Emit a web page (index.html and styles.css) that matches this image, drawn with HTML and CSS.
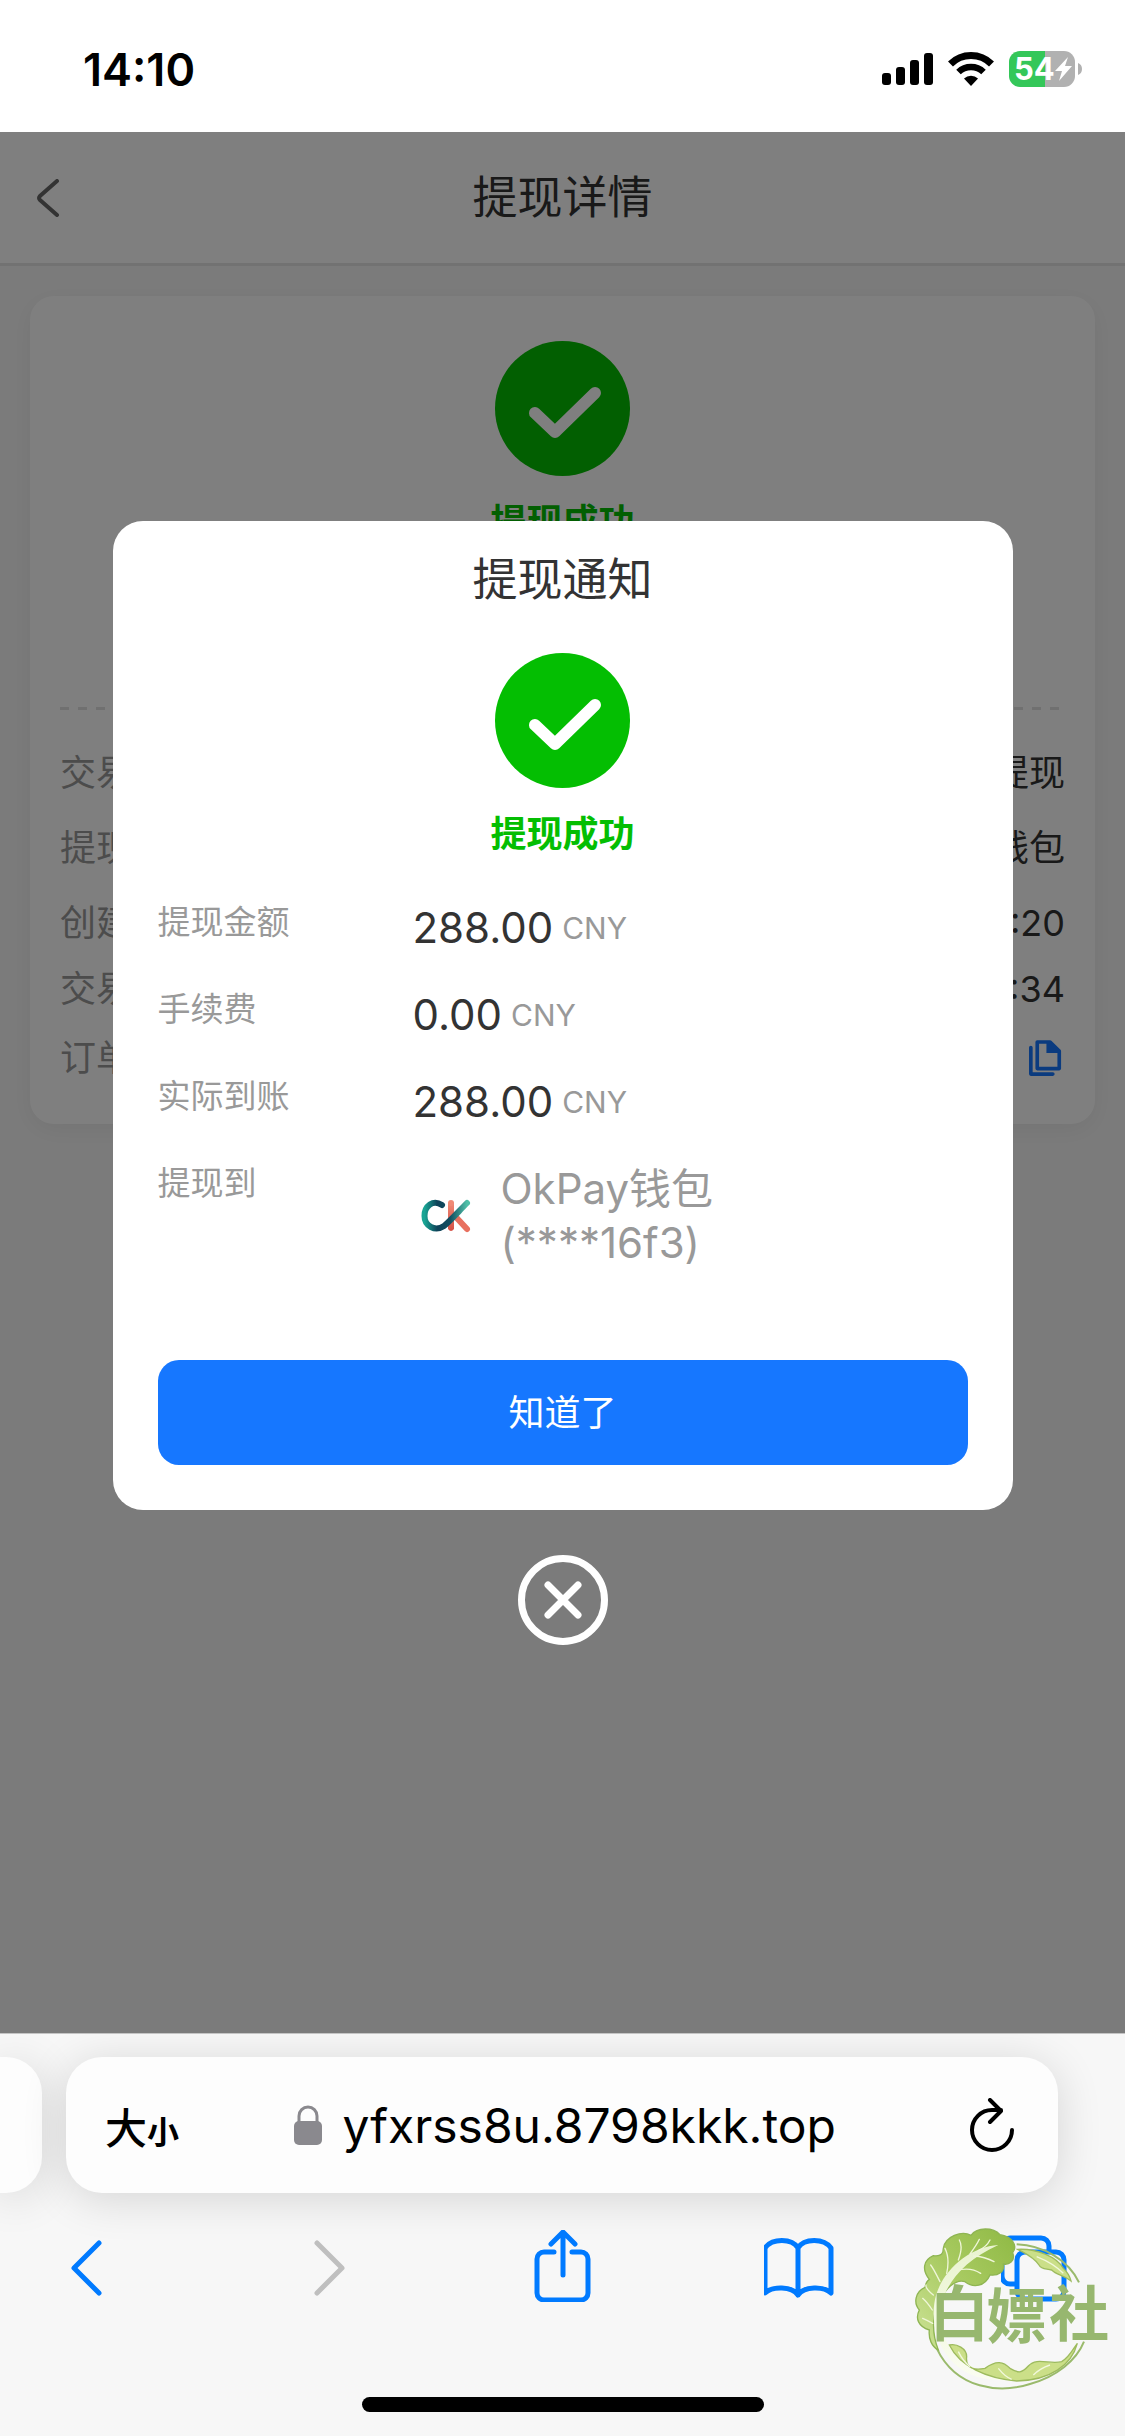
FILE: index.html
```html
<!DOCTYPE html>
<html lang="zh-CN">
<head>
  <meta charset="UTF-8" />
  <meta name="viewport" content="width=device-width, initial-scale=1.0" />
  <title>提现详情</title>
  <link rel="stylesheet" href="styles.css">
</head>
<body>
  <div class="status-bar">
    <span class="time">14:10</span>
    <div class="status-icons">
      <svg width="51" height="32" viewBox="0 0 51 32">
        <rect x="0" y="20" width="9" height="12" rx="3"/>
        <rect x="14" y="14" width="9" height="18" rx="3"/>
        <rect x="28" y="7" width="9" height="25" rx="3"/>
        <rect x="42" y="0" width="9" height="32" rx="3"/>
      </svg>
      <svg width="46" height="34" viewBox="0 0 46 34">
        <path d="M2.5 12a29 29 0 0 1 41 0" fill="none" stroke="#000" stroke-width="7"/>
        <path d="M10.500 20a18 18 0 0 1 25 0" fill="none" stroke="#000" stroke-width="6.500"/>
        <path d="M23 34l-7-7.500a10.500 10.500 0 0 1 14 0z"/>
      </svg>
      <svg width="73" height="36" viewBox="0 0 73 36">
        <path d="M11 0H36V36H11A11 11 0 0 1 0 25V11A11 11 0 0 1 11 0z" fill="#34c759"/>
        <path d="M36 0H55A11 11 0 0 1 66 11V25A11 11 0 0 1 55 36H36z" fill="#b1b1b1"/>
        <path d="M69 12q4 1.500 4 6t-4 6z" fill="#b1b1b1"/>
        <text class="battery-text" x="5" y="29">54</text>
        <path d="M59 6L46 20h7l-3 10 13-15h-7z" fill="#fff"/>
      </svg>
    </div>
  </div>

  <main class="page">
    <header class="header">
      <button class="back" aria-label="返回">
        <svg width="24" height="38" viewBox="0 0 24 38"><path d="M21 2L4 17q-2 2 0 4L21 36"/></svg>
      </button>
      <h1>提现详情</h1>
    </header>

    <section class="card">
      <div class="result">
        <svg class="check" viewBox="0 0 135 135"><circle cx="67.500" cy="67.500" r="67.500"/><path d="M40 72L60 91 100 52"/></svg>
        <p class="result-text">提现成功</p>
      </div>
      <p class="amount">288.00 CNY</p>
      <dl class="details">
        <div class="row"><dt>交易类型</dt><dd>提现</dd></div>
        <div class="row"><dt>提现方式</dt><dd>OkPay钱包</dd></div>
        <div class="row"><dt>创建时间</dt><dd>14:10:20</dd></div>
        <div class="row row-compact"><dt>交易时间</dt><dd>14:10:34</dd></div>
        <div class="row">
          <dt>订单号</dt>
          <dd>
            <button class="copy" aria-label="复制">
              <svg width="33" height="37" viewBox="0 0 36 40">
                <path d="M9 2H23L33 12V31H9z"/><path d="M2 8V37H26"/><path class="fold" d="M19 1h4l11 11v2H19z"/>
              </svg>
            </button>
          </dd>
        </div>
      </dl>
    </section>

    <div class="overlay">
      <div class="modal" role="dialog" aria-labelledby="modal-title">
        <h2 id="modal-title">提现通知</h2>
        <div class="result">
          <svg class="check" viewBox="0 0 135 135"><circle cx="67.500" cy="67.500" r="67.500"/><path d="M40 72L60 91 100 52"/></svg>
          <p class="result-text">提现成功</p>
        </div>
        <dl class="info">
          <dt>提现金额</dt>
          <dd>288.00 <small>CNY</small></dd>
          <dt>手续费</dt>
          <dd>0.00 <small>CNY</small></dd>
          <dt>实际到账</dt>
          <dd>288.00 <small>CNY</small></dd>
          <dt>提现到</dt>
          <dd class="wallet">
            <svg width="60" height="60" viewBox="0 0 60 60">
              <defs>
                <linearGradient id="teal" x1="0" y1="0" x2="1" y2="0">
                  <stop offset="0" stop-color="#19a594"/>
                  <stop offset=".3" stop-color="#0e4258"/>
                  <stop offset=".6" stop-color="#124d60"/>
                  <stop offset="1" stop-color="#4fc0a8"/>
                </linearGradient>
                <linearGradient id="coral" x1="0" y1="0" x2="0" y2="1">
                  <stop offset="0" stop-color="#f08a75"/>
                  <stop offset="1" stop-color="#d44f45"/>
                </linearGradient>
              </defs>
              <path d="M32 16.500h6V43q-3 4-6 0z" fill="url(#coral)"/>
              <circle cx="35" cy="17" r="3" fill="#f08a75"/>
              <path d="M38 29L51 43" stroke="#e8705f" stroke-width="6" stroke-linecap="round"/>
              <path d="M26 19C17 13 8.500 20 8.500 30 8.500 40 19 46 28 40 35 34 43 25 51 17" fill="none" stroke="url(#teal)" stroke-width="6" stroke-linecap="round"/>
            </svg>
            <span>OkPay钱包<br>(****16f3)</span>
          </dd>
        </dl>
        <button class="confirm">知道了</button>
      </div>
      <button class="close" aria-label="关闭">
        <svg width="90" height="90" viewBox="0 0 90 90"><circle cx="45" cy="45" r="41.500"/><path d="M30 30L60 60M60 30L30 60"/></svg>
      </button>
    </div>
  </main>

  <footer class="browser-bar">
    <div class="tabs-row">
      <div class="prev-tab"></div>
      <div class="address">
        <button class="text-size" aria-label="大小">大<small>小</small></button>
        <label class="url">
          <svg width="28" height="40" viewBox="0 0 28 40">
            <rect x="0" y="16" width="28" height="24" rx="5" fill="#8a898e"/>
            <path d="M5 17V11a9 9 0 0 1 18 0V17" fill="none" stroke="#8a898e" stroke-width="3"/>
          </svg>
          <input type="text" value="yfxrss8u.8798kkk.top" aria-label="网址">
        </label>
        <button class="reload" aria-label="刷新">
          <svg width="46" height="54" viewBox="0 0 46 54"><path d="M43 32A20 20 0 1 1 23 12H32M21 2L32 13 21 24"/></svg>
        </button>
      </div>
    </div>
    <nav class="toolbar">
      <button aria-label="后退"><svg viewBox="0 0 72 72"><path d="M47 13L22 38 47 63"/></svg></button>
      <button class="disabled" aria-label="前进"><svg viewBox="0 0 72 72"><path d="M28 13L53 38 28 63"/></svg></button>
      <button aria-label="分享"><svg viewBox="0 0 72 72"><path d="M27 22H17a7 7 0 0 0-7 7V63a7 7 0 0 0 7 7H54a7 7 0 0 0 7-7V29a7 7 0 0 0-7-7H45M36 3V45M24 14L36 2 48 14"/></svg></button>
      <button aria-label="书签"><svg viewBox="0 0 72 72"><path d="M34 18C28 8 8 8 1 18V63C8 56 28 56 34 65 40 56 60 56 67 63V18C60 8 40 8 34 18V65"/></svg></button>
      <button aria-label="标签页"><svg viewBox="0 0 72 72"><path d="M15 54H9a8 8 0 0 1-8-8V16a8 8 0 0 1 8-8H40a8 8 0 0 1 8 8V21"/><rect x="16" y="22" width="47" height="47" rx="8"/></svg></button>
    </nav>
    <div class="home-indicator"></div>

    <svg class="watermark" viewBox="0 0 705 600">
      <defs>
        <linearGradient id="leaf" x1="1" y1="0" x2="0" y2="1">
          <stop offset="0" stop-color="#8fb944"/>
          <stop offset=".5" stop-color="#a9cb62"/>
          <stop offset="1" stop-color="#cfe49a"/>
        </linearGradient>
        <linearGradient id="stem" x1="0" y1="0" x2="0" y2="1">
          <stop offset="0" stop-color="#e9f3cf"/>
          <stop offset="1" stop-color="#fbfdf2"/>
        </linearGradient>
      </defs>
      <!-- thin outer rings -->
      <path d="M380 103C460 106 535 150 567 217M140 415C200 540 330 550 420 522 500 500 560 450 582 395" fill="none" stroke="#9aba6c" stroke-width="6"/>
      <!-- big leaf -->
      <path d="M145 420C125 410 115 385 118 360 85 350 75 325 88 300 70 280 75 245 105 232 108 215 112 212 118 208 95 180 100 150 130 137 155 140 160 130 160 115 165 80 215 60 243 76 262 50 310 52 330 74 365 80 385 105 368 128 378 155 355 165 340 162 345 185 325 198 300 195 285 230 250 235 225 215 195 205 165 240 150 270 125 310 125 370 145 420z" fill="url(#leaf)" stroke="#8fb553" stroke-width="4"/>
      <path d="M325 105C235 110 145 190 133 280 120 370 165 470 260 500 300 512 350 512 400 510 280 505 185 450 158 370 130 280 180 170 325 105z" fill="url(#stem)"/>
      <path d="M170 190Q180 145 165 115M205 150Q220 110 208 90M240 132Q260 105 268 88M265 122Q290 110 300 90M250 138Q285 140 312 155M200 182Q240 170 272 190M150 215Q130 175 122 165M130 255Q105 235 108 225M127 300Q110 275 98 265M128 340Q110 330 98 325" fill="none" stroke="#eff6d8" stroke-width="4" stroke-linecap="round"/>
      <!-- lower and right leaves -->
      <path d="M178 405C200 400 230 415 230 440 225 480 260 480 285 475 320 450 340 455 360 475 385 490 395 490 415 468 440 440 480 465 515 455 540 440 550 415 562 400 545 465 480 512 380 513 290 505 210 470 178 405z" fill="#cbdf88" stroke="#9dbb5e" stroke-width="4"/>
      <path d="M383 118C440 115 500 140 520 175 535 190 540 200 543 213 520 195 500 195 485 180 470 175 455 180 447 165 430 140 405 130 383 118z" fill="#cbdf88" stroke="#9dbb5e" stroke-width="4"/>
      <path d="M205 425Q220 455 240 470M325 475Q345 500 365 508M480 465Q450 475 430 495M440 140Q490 160 520 190" fill="none" stroke="#f2f8dc" stroke-width="4"/>
      <text x="118" y="378">白</text>
      <text x="290" y="384">嫖</text>
      <text x="478" y="378">社</text>
    </svg>
  </footer>
</body>
</html>
```

FILE: styles.css
```css
* {
  box-sizing: border-box;
}
body {
  margin: 0;
  min-height: 100vh;
  display: flex;
  flex-direction: column;
  font-family: Inter, "Noto Sans CJK SC", sans-serif;
  color: #333;
  background: #fff;
}
h1, h2, p, dl, dd {
  margin: 0;
}
button {
  display: flex;
  align-items: center;
  justify-content: center;
  padding: 0;
  border: 0;
  background: none;
  font-family: inherit;
  color: inherit;
}
svg {
  display: block;
  flex: none;
}

/* status bar */
.status-bar {
  display: flex;
  justify-content: space-between;
  align-items: center;
  height: 132px;
  padding: 6px 43px 0 83px;
}
.time {
  font-size: 45px;
  font-weight: 600;
  color: #000;
}
.status-icons {
  display: flex;
  align-items: center;
  gap: 15px;
}
.battery-text {
  font-size: 31px;
  font-weight: 700;
  fill: #fff;
}

/* page */
.page {
  position: relative;
  flex: 1;
  background: #f7f7f7;
}
.header {
  display: grid;
  grid-template-columns: 96px 1fr 96px;
  align-items: center;
  height: 134px;
  background: #fff;
  border-bottom: 3px solid #e5e5e5;
}
.back path {
  fill: none;
  stroke: #666;
  stroke-width: 4;
  stroke-linecap: round;
}
h1, h2 {
  font-size: 45px;
  font-weight: 400;
  line-height: 66px;
  text-align: center;
}
.card {
  margin: 30px;
  padding: 45px 30px 36px;
  background: #fff;
  border-radius: 24px;
  box-shadow: 0 6px 24px rgba(0, 0, 0, 0.06);
}
.result {
  display: flex;
  flex-direction: column;
  align-items: center;
  gap: 18px;
}
.check {
  width: 135px;
  height: 135px;
  fill: #04be02;
}
.check path {
  fill: none;
  stroke: #fff;
  stroke-width: 12;
  stroke-linecap: round;
  stroke-linejoin: round;
}
.result-text {
  font-size: 36px;
  font-weight: 700;
  line-height: 56px;
  color: #04be02;
}
.amount {
  padding: 49px 0 48px;
  font-size: 42px;
  line-height: 60px;
  text-align: center;
}
.details {
  display: flex;
  flex-direction: column;
  gap: 21px;
  padding-top: 39px;
  font-size: 36px;
  line-height: 54px;
  /* dashed divider */
  background: repeating-linear-gradient(90deg, #e0e0e0 0 9px, transparent 9px 18px) top / 100% 3px no-repeat;
}
.row {
  display: flex;
  justify-content: space-between;
  align-items: center;
}
.row-compact {
  line-height: 36px;
}
.row dt {
  color: #999;
}
.copy {
  width: 39px;
  height: 60px;
}
.copy path {
  fill: none;
  stroke: #1677ff;
  stroke-width: 4;
  stroke-linejoin: round;
  stroke-linecap: round;
}
.copy .fold {
  fill: #1677ff;
  stroke: none;
}

/* modal */
.overlay {
  position: absolute;
  inset: 0;
  display: flex;
  flex-direction: column;
  align-items: center;
  justify-content: center;
  gap: 45px;
  background: rgba(0, 0, 0, 0.5);
}
.modal {
  width: 80%;
  padding: 26px 45px 45px;
  background: #fff;
  border-radius: 30px;
}
.modal h2 {
  margin-bottom: 40px;
}
.info {
  display: grid;
  grid-template-columns: 255px 1fr;
  row-gap: 27px;
  margin: 36px 0 90px;
}
.info dt {
  font-size: 33px;
  line-height: 48px;
  color: #999;
}
.info dd {
  display: flex;
  align-items: center;
  gap: 9px;
  font-size: 42px;
  line-height: 60px;
}
.info small {
  font-size: 30px;
  color: #999;
}
.info .wallet {
  gap: 25px;
  padding: 3px 0 0 3px;
  line-height: 54px;
  color: #999;
}
.confirm {
  width: 100%;
  height: 105px;
  padding-bottom: 4px;
  border-radius: 21px;
  background: #1677ff;
  color: #fff;
  font-size: 36px;
}
.close svg {
  fill: none;
  stroke: #fff;
  stroke-width: 7;
  stroke-linecap: round;
}

/* browser bar */
.browser-bar {
  position: relative;
  padding-bottom: 24px;
  border-top: 1px solid #c4c4c4;
  background: #f7f7f7;
  overflow: hidden;
}
.tabs-row {
  display: flex;
  gap: 24px;
  padding: 23px 67px 37px 0;
}
.prev-tab, .address {
  height: 136px;
  background: #fdfdfd;
  border-radius: 36px;
  box-shadow: 0 6px 45px rgba(0, 0, 0, 0.14);
}
.prev-tab {
  width: 42px;
  border-radius: 0 36px 36px 0;
}
.address {
  flex: 1;
  display: grid;
  grid-template-columns: 1fr auto 1fr;
  align-items: center;
  padding: 0 43px 0 39px;
  color: #000;
}
.text-size {
  justify-self: start;
  align-items: baseline;
  font-size: 42px;
  font-weight: 500;
}
.text-size small {
  font-size: 32px;
  font-weight: 700;
}
.url {
  display: flex;
  align-items: center;
  gap: 21px;
  padding-left: 24px;
}
.url input {
  width: 508px;
  padding: 0;
  border: 0;
  background: none;
  font-family: inherit;
  font-size: 48px;
  color: inherit;
}
.reload {
  justify-self: end;
}
.reload path {
  fill: none;
  stroke: #000;
  stroke-width: 4;
  stroke-linecap: round;
  stroke-linejoin: round;
}
.toolbar {
  display: flex;
  justify-content: space-between;
  padding: 0 52px 95px;
}
.toolbar svg {
  width: 72px;
  height: 72px;
  fill: none;
  stroke: #007aff;
  stroke-width: 5;
  stroke-linecap: round;
  stroke-linejoin: round;
}
.toolbar .disabled svg {
  stroke: #bfbfbf;
}
.home-indicator {
  width: 402px;
  height: 15px;
  margin: 0 auto;
  border-radius: 8px;
  background: #000;
}
.watermark {
  position: absolute;
  right: 0;
  bottom: 26px;
  width: 235px;
  height: 200px;
}
.watermark text {
  font-family: "Noto Sans CJK SC", sans-serif;
  font-size: 180px;
  font-weight: 700;
  fill: #97b76f;
}
```
